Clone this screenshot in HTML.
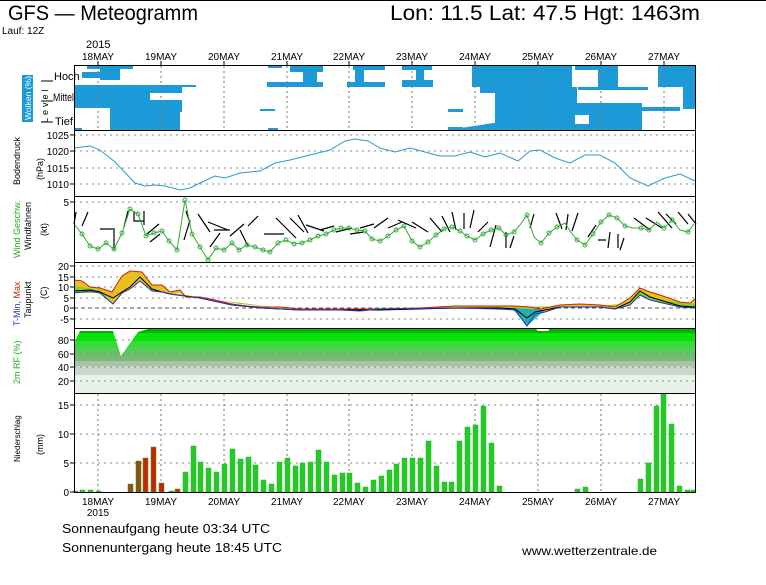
<!DOCTYPE html>
<html><head><meta charset="utf-8"><style>
html,body{margin:0;padding:0;background:#fff;}
svg{display:block;font-family:"Liberation Sans",sans-serif;}
</style></head><body>
<svg width="766" height="585" viewBox="0 0 766 585" xmlns="http://www.w3.org/2000/svg">
<rect width="766" height="585" fill="#fff"/>
<line x1="0" y1="0.5" x2="766" y2="0.5" stroke="#000"/>
<text x="8" y="20" font-size="21" textLength="190" lengthAdjust="spacingAndGlyphs">GFS — Meteogramm</text>
<text x="390" y="20" font-size="21" textLength="310" lengthAdjust="spacingAndGlyphs">Lon: 11.5 Lat: 47.5 Hgt: 1463m</text>
<text x="2" y="34" font-size="10">Lauf: 12Z</text>
<text x="86" y="48" font-size="11">2015</text>
<g font-size="10" text-anchor="middle">
<text x="98" y="60">18MAY</text><text x="161" y="60">19MAY</text><text x="224" y="60">20MAY</text><text x="287" y="60">21MAY</text><text x="349" y="60">22MAY</text><text x="412" y="60">23MAY</text><text x="475" y="60">24MAY</text><text x="538" y="60">25MAY</text><text x="601" y="60">26MAY</text><text x="664" y="60">27MAY</text>
</g>

<rect x="74" y="328" width="621" height="5" fill="#00b400"/>
<rect x="74" y="333" width="621" height="8" fill="#00e600"/>
<rect x="74" y="341" width="621" height="6" fill="#33dd33"/>
<rect x="74" y="347" width="621" height="7" fill="#55cc55"/>
<rect x="74" y="354" width="621" height="7" fill="#77bb77"/>
<rect x="74" y="361" width="621" height="5" fill="#a8c4a8"/>
<rect x="74" y="366" width="621" height="9" fill="#cad6ca"/>
<rect x="74" y="375" width="621" height="18" fill="#e8f2e8"/>
<polygon points="74,328 74,343 80,331 113,331 121,356 138,332 148,329 148,328" fill="#fff"/>
<polygon points="535,328 538,331 548,331 550,328" fill="#fff"/>

<g fill="#1c9ad8">
<rect x="87" y="65" width="46" height="4"/><rect x="100" y="68" width="20" height="12"/><rect x="82" y="72" width="22" height="6"/>
<rect x="74" y="85" width="76" height="23"/><rect x="150" y="85" width="32" height="8"/><rect x="182" y="85" width="14" height="2"/>
<rect x="74" y="93" width="36" height="15"/><rect x="150" y="100" width="32" height="12"/>
<rect x="110" y="108" width="70" height="22"/><rect x="74" y="128" width="8" height="2"/>
<rect x="267" y="82" width="56" height="5"/><rect x="290" y="65" width="33" height="7"/><rect x="303" y="72" width="14" height="10"/><rect x="268" y="65" width="14" height="3"/>
<rect x="260" y="109" width="15" height="2"/><rect x="268" y="128" width="10" height="2"/>
<rect x="353" y="65" width="32" height="5"/><rect x="355" y="70" width="9" height="12"/><rect x="347" y="82" width="38" height="5"/>
<rect x="402" y="65" width="30" height="5"/><rect x="416" y="70" width="8" height="10"/><rect x="402" y="80" width="31" height="7"/>
<rect x="448" y="109" width="15" height="3"/><rect x="448" y="127" width="15" height="3"/>
<rect x="472" y="65" width="100" height="22"/><rect x="495" y="87" width="82" height="43"/>
<polygon points="448,130 545,115 545,130"/><polygon points="480,87 495,87 495,93 480,93"/>
<rect x="575" y="65" width="25" height="5"/><rect x="598" y="65" width="20" height="22"/><rect x="578" y="87" width="70" height="3"/>
<rect x="572" y="103" width="70" height="27"/><rect x="642" y="107" width="38" height="4"/>
<rect x="658" y="65" width="37" height="22"/><rect x="683" y="87" width="12" height="22"/>
</g>
<g fill="#fff"><rect x="575" y="115" width="14" height="9"/><rect x="620" y="70" width="38" height="10"/></g>

<g stroke="#888" stroke-dasharray="2,4" stroke-width="1">
<line x1="74" y1="135" x2="695" y2="135"/><line x1="74" y1="151" x2="695" y2="151"/><line x1="74" y1="168" x2="695" y2="168"/><line x1="74" y1="184" x2="695" y2="184"/>
<line x1="74" y1="202" x2="695" y2="202"/>
<line x1="74" y1="266" x2="695" y2="266"/><line x1="74" y1="277" x2="695" y2="277"/><line x1="74" y1="287" x2="695" y2="287"/><line x1="74" y1="298" x2="695" y2="298"/><line x1="74" y1="319" x2="695" y2="319"/>
<line x1="74" y1="340" x2="695" y2="340"/><line x1="74" y1="354" x2="695" y2="354"/><line x1="74" y1="367" x2="695" y2="367"/><line x1="74" y1="381" x2="695" y2="381"/>
<line x1="74" y1="405" x2="695" y2="405"/><line x1="74" y1="434" x2="695" y2="434"/><line x1="74" y1="463" x2="695" y2="463"/>
</g>
<line x1="74" y1="308" x2="695" y2="308" stroke="#555" stroke-dasharray="4,3"/>
<g stroke="#777" stroke-dasharray="2,3">
<path d="M98 66V130M161 66V130M224 66V130M287 66V130M349 66V130M412 66V130M475 66V130M538 66V130M601 66V130M664 66V130"/>
<path d="M98 394V492M161 394V492M224 394V492M287 394V492M349 394V492M412 394V492M475 394V492M538 394V492M601 394V492M664 394V492"/>
</g>

<polyline fill="none" stroke="#2a9ad0" points="74,148 90,146 100,150 115,162 135,183 145,186 155,185 165,186 180,190 190,188 200,183 215,176 225,178 240,173 260,171 275,163 290,160 310,155 330,150 345,141 355,139 368,141 380,148 395,152 410,148 425,152 440,156 455,156 470,152 485,157 500,153 518,161 530,151 540,150 555,158 570,163 585,155 600,155 615,163 630,178 648,186 665,178 680,174 695,181"/>

<g stroke="#000" stroke-width="1.2" fill="none">
<path d="M76 212l-2 12M88 212l-6 14M100 229h15M114 230v20M128 211l-4 16M134 211v10l10 0M144 211v14M147 234l12-10M150 242l10-8M186 211l4 12M190 220l-6 20M198 214l12 18M208 222l20 8M214 230l16 0M220 233l-10 14M230 236l14-12M240 230l8 16M258 216l-10 10M264 234l20 0M276 218l20 20M290 218l14 14M298 215l10 18M306 225l18 6M320 230l14-4M336 232l16-4M350 234l14-2M360 228l14-4M374 228l14-10M388 228l14-6M398 220l18 8M412 222l16 10M430 218l12 14M442 216l8 16M452 212l4 18M464 213v16M474 210l-4 18M488 222l-10 10M496 225l-6 22M506 232v16M514 236l-4 12M534 214l-4 14M556 213l6 16M568 214l-2 16M578 213l-6 18M596 225l-8 12M598 240h8M610 232l-2 16M618 234v14M624 238l-4 12M634 218l16 12M646 218l16 10M658 212l14 16M666 214l10 10M678 212l10 12M688 214l8 10"/>
</g>
<polyline fill="none" stroke="#33aa33" points="74,224 82,234 90,246 98,249 106,243 114,249 122,233 130,209 138,214 146,236 154,233 162,231 169,241 177,250 185,200 192,234 200,247 208,260 216,248 224,250 232,243 239,250 247,245 255,247 263,250 270,252 278,243 286,240 294,244 302,243 310,240 318,236 326,234 334,230 341,228 349,228 357,230 365,231 372,239 380,241 388,236 396,230 404,226 412,241 420,247 428,242 436,235 444,229 452,227 460,231 467,236 475,240 483,234 491,230 499,228 506,235 514,232 520,225 527,215 534,237 541,243 549,233 557,227 565,223 570,231 577,240 585,245 593,234 601,222 609,215 617,218 625,226 633,228 641,228 649,230 657,222 664,228 672,220 680,230 688,232 694,224"/>
<g fill="none" stroke="#33aa33" stroke-width="0.9">
<circle cx="82" cy="234" r="2"/><circle cx="90" cy="246" r="2"/><circle cx="98" cy="249" r="2"/><circle cx="106" cy="243" r="2"/><circle cx="114" cy="249" r="2"/><circle cx="122" cy="233" r="2"/><circle cx="130" cy="209" r="2"/><circle cx="138" cy="214" r="2"/><circle cx="146" cy="236" r="2"/><circle cx="154" cy="233" r="2"/><circle cx="162" cy="231" r="2"/><circle cx="169" cy="241" r="2"/><circle cx="177" cy="250" r="2"/><circle cx="185" cy="200" r="2"/><circle cx="192" cy="234" r="2"/><circle cx="200" cy="247" r="2"/><circle cx="208" cy="260" r="2"/><circle cx="216" cy="248" r="2"/><circle cx="224" cy="250" r="2"/><circle cx="232" cy="243" r="2"/><circle cx="239" cy="250" r="2"/><circle cx="247" cy="245" r="2"/><circle cx="255" cy="247" r="2"/><circle cx="263" cy="250" r="2"/><circle cx="270" cy="252" r="2"/><circle cx="278" cy="243" r="2"/><circle cx="286" cy="240" r="2"/><circle cx="294" cy="244" r="2"/><circle cx="302" cy="243" r="2"/><circle cx="310" cy="240" r="2"/><circle cx="318" cy="236" r="2"/><circle cx="326" cy="234" r="2"/><circle cx="334" cy="230" r="2"/><circle cx="341" cy="228" r="2"/><circle cx="349" cy="228" r="2"/><circle cx="357" cy="230" r="2"/><circle cx="365" cy="231" r="2"/><circle cx="372" cy="239" r="2"/><circle cx="380" cy="241" r="2"/><circle cx="388" cy="236" r="2"/><circle cx="396" cy="230" r="2"/><circle cx="404" cy="226" r="2"/><circle cx="412" cy="241" r="2"/><circle cx="420" cy="247" r="2"/><circle cx="428" cy="242" r="2"/><circle cx="436" cy="235" r="2"/><circle cx="444" cy="229" r="2"/><circle cx="452" cy="227" r="2"/><circle cx="460" cy="231" r="2"/><circle cx="467" cy="236" r="2"/><circle cx="475" cy="240" r="2"/><circle cx="483" cy="234" r="2"/><circle cx="491" cy="230" r="2"/><circle cx="499" cy="228" r="2"/><circle cx="506" cy="235" r="2"/><circle cx="514" cy="232" r="2"/><circle cx="527" cy="215" r="2"/><circle cx="541" cy="243" r="2"/><circle cx="549" cy="233" r="2"/><circle cx="557" cy="227" r="2"/><circle cx="577" cy="240" r="2"/><circle cx="585" cy="245" r="2"/><circle cx="593" cy="234" r="2"/><circle cx="601" cy="222" r="2"/><circle cx="609" cy="215" r="2"/><circle cx="617" cy="218" r="2"/><circle cx="625" cy="226" r="2"/><circle cx="641" cy="228" r="2"/><circle cx="649" cy="230" r="2"/><circle cx="664" cy="228" r="2"/><circle cx="672" cy="220" r="2"/><circle cx="688" cy="232" r="2"/>
</g>

<polygon fill="#e8c020" points="74,280 82,281 90,287 100,288 112,292 122,276 130,271 142,272 152,285 162,285 170,292 180,290 186,297 200,297 215,300 232,304 247,306 262,307 280,307 300,309 340,309 380,309 420,308 455,306 500,306 515,306 530,307 540,309 560,305 580,304 600,305 615,307 630,298 640,288 650,292 660,295 680,302 690,303 695,299 695,308 690,307 680,307 660,303 650,300 640,295 630,305 615,309 600,307 560,307 545,312 515,310 475,309 420,309 380,309 360,311 340,310 300,310 262,308 247,307 232,305 215,301 200,298 186,298 180,293 170,294 162,292 152,291 140,281 130,289 122,293 113,304 100,293 90,291 74,293"/>
<polygon fill="#8ccc22" points="74,286 100,290 113,304 122,293 130,289 140,281 152,290 170,293 200,297 240,304 300,309 600,306 630,303 640,291 660,300 695,304 695,308 680,307 660,303 640,295 630,305 600,307 300,310 200,298 162,292 152,291 140,281 130,289 122,293 113,304 100,293 74,293"/>
<polygon fill="#22b0b0" points="512,308 527,326 545,310 535,309"/>
<polyline fill="none" stroke="#cc2200" points="74,280 82,281 90,287 100,288 112,292 122,276 130,271 142,272 152,285 162,285 170,292 180,290 186,297 200,297 215,300 232,304 247,306 262,307 280,307 300,309 340,309 380,309 420,308 455,306 500,306 515,306 530,307 540,309 560,305 580,304 600,305 615,307 630,298 640,288 650,292 660,295 680,302 690,303 695,299"/>
<polyline fill="none" stroke="#000" points="74,291 90,290 100,292 113,298 122,292 130,287 140,277 152,289 162,292 170,294 200,298 232,305 262,308 300,310 380,310 455,308 500,308 515,309 527,318 535,312 560,307 600,307 615,309 630,302 640,291 650,297 680,306 695,307"/>
<polyline fill="none" stroke="#2233cc" points="74,293 90,291 100,293 113,304 122,293 130,289 140,281 152,291 162,292 170,294 200,298 232,305 262,308 300,310 340,310 360,311 380,309 455,308 500,309 515,310 527,326 535,314 545,312 560,307 600,307 615,309 630,305 640,295 650,300 680,307 695,308"/>

<path fill="#22cc22" stroke="#33aa33" stroke-width="0.5" d="M73 492V491h5V492zM80 492V490h5V492zM88 492V490h5V492zM96 492V491h5V492zM169 492V491h5V492zM183 492V472h5V492zM191 492V446h5V492zM198 492V462h5V492zM206 492V468h5V492zM214 492V472h5V492zM222 492V464h5V492zM230 492V449h5V492zM238 492V459h5V492zM246 492V457h5V492zM253 492V465h5V492zM261 492V480h5V492zM269 492V484h5V492zM277 492V462h5V492zM285 492V458h5V492zM293 492V466h5V492zM300 492V463h5V492zM308 492V462h5V492zM316 492V450h5V492zM324 492V462h5V492zM332 492V475h5V492zM340 492V473h5V492zM347 492V473h5V492zM355 492V483h5V492zM363 492V487h5V492zM371 492V480h5V492zM379 492V476h5V492zM387 492V470h5V492zM394 492V464h5V492zM402 492V458h5V492zM410 492V458h5V492zM418 492V458h5V492zM426 492V441h5V492zM434 492V466h5V492zM442 492V482h5V492zM449 492V482h5V492zM457 492V441h5V492zM465 492V427h5V492zM473 492V425h5V492zM481 492V406h5V492zM489 492V443h5V492zM497 492V486h5V492zM575 492V489h5V492zM583 492V487h5V492zM638 492V479h5V492zM646 492V463h5V492zM654 492V406h5V492zM661 492V394h5V492zM669 492V424h5V492zM677 492V486h5V492zM685 492V490h5V492zM691 492V490h4V492z"/>
<path fill="#cc2200" stroke="#33aa33" stroke-width="0.6" d="M128 492V484h5V492zM136 492V461h5V492zM143 492V458h5V492zM151 492V447h5V492zM159 492V483h5V492zM175 492V489h5V492z"/>
<path fill="#7a5a10" d="M129 492V485h3V492zM137 492V462h3V492z"/>

<g fill="none" stroke="#000" stroke-width="1">
<rect x="74.5" y="65.5" width="621" height="427"/>
<line x1="74" y1="130.5" x2="696" y2="130.5"/><line x1="74" y1="196.5" x2="696" y2="196.5"/><line x1="74" y1="262.5" x2="696" y2="262.5"/><line x1="74" y1="328.5" x2="696" y2="328.5"/><line x1="74" y1="393.5" x2="696" y2="393.5"/>
<path d="M98 61v5M161 61v5M224 61v5M287 61v5M349 61v5M412 61v5M475 61v5M538 61v5M601 61v5M664 61v5"/>
<path d="M70 135h4M70 151h4M70 168h4M70 184h4M70 202h4M70 266h4M70 277h4M70 287h4M70 298h4M70 308h4M70 319h4M70 340h4M70 354h4M70 367h4M70 381h4M70 405h4M70 434h4M70 463h4M70 492h4"/>
</g>

<rect x="22" y="75" width="11" height="47" fill="#1c9ad8"/>
<text transform="translate(31,120) rotate(-90)" font-size="8.5" fill="#fff" textLength="44" lengthAdjust="spacingAndGlyphs">Wolken (%)</text>
<text transform="translate(48,123) rotate(-90)" font-size="9" letter-spacing="3">Level</text>
<path d="M41 81h12M41 101h12M41 122h12" stroke="#000"/>
<g font-size="11">
<text x="54" y="80">Hoch</text><text x="53" y="101" textLength="21" lengthAdjust="spacingAndGlyphs">Mittel</text><text x="55" y="125">Tief</text>
</g>
<g font-size="10" text-anchor="end">
<text x="69" y="139">1025</text><text x="69" y="155">1020</text><text x="69" y="172">1015</text><text x="69" y="188">1010</text>
<text x="69" y="206">5</text>
<text x="69" y="270">20</text><text x="69" y="281">15</text><text x="69" y="291">10</text><text x="69" y="302">5</text><text x="69" y="312">0</text><text x="69" y="323">-5</text>
<text x="69" y="344">80</text><text x="69" y="358">60</text><text x="69" y="371">40</text><text x="69" y="385">20</text>
<text x="69" y="409">15</text><text x="69" y="438">10</text><text x="69" y="467">5</text><text x="69" y="496">0</text>
</g>
<g font-size="9">
<text transform="translate(20,185) rotate(-90)">Bodendruck</text>
<text transform="translate(43,180) rotate(-90)">(hPa)</text>
<text transform="translate(20,258) rotate(-90)" fill="#22aa22">Wind Geschw.</text>
<text transform="translate(31,250) rotate(-90)">Windfahnen</text>
<text transform="translate(47,236) rotate(-90)">(kt)</text>
<text transform="translate(20,326) rotate(-90)"><tspan fill="#2233cc">T-Min,</tspan> <tspan fill="#cc2200">Max</tspan></text>
<text transform="translate(31,318) rotate(-90)">Taupunkt</text>
<text transform="translate(47,299) rotate(-90)">(C)</text>
<text transform="translate(20,384) rotate(-90)" fill="#22aa22">2m RF (%)</text>
<text transform="translate(20,462) rotate(-90)" font-size="8">Niederschlag</text>
<text transform="translate(43,455) rotate(-90)">(mm)</text>
</g>

<g font-size="10" text-anchor="middle">
<text x="98" y="505">18MAY</text><text x="161" y="505">19MAY</text><text x="224" y="505">20MAY</text><text x="287" y="505">21MAY</text><text x="349" y="505">22MAY</text><text x="412" y="505">23MAY</text><text x="475" y="505">24MAY</text><text x="538" y="505">25MAY</text><text x="601" y="505">26MAY</text><text x="664" y="505">27MAY</text>
<text x="98" y="516">2015</text>
</g>
<text x="62" y="533" font-size="13" textLength="208" lengthAdjust="spacingAndGlyphs">Sonnenaufgang heute 03:34 UTC</text>
<text x="62" y="552" font-size="13" textLength="220" lengthAdjust="spacingAndGlyphs">Sonnenuntergang heute 18:45 UTC</text>
<text x="522" y="555" font-size="12" textLength="135" lengthAdjust="spacingAndGlyphs">www.wetterzentrale.de</text>
</svg>
</body></html>
